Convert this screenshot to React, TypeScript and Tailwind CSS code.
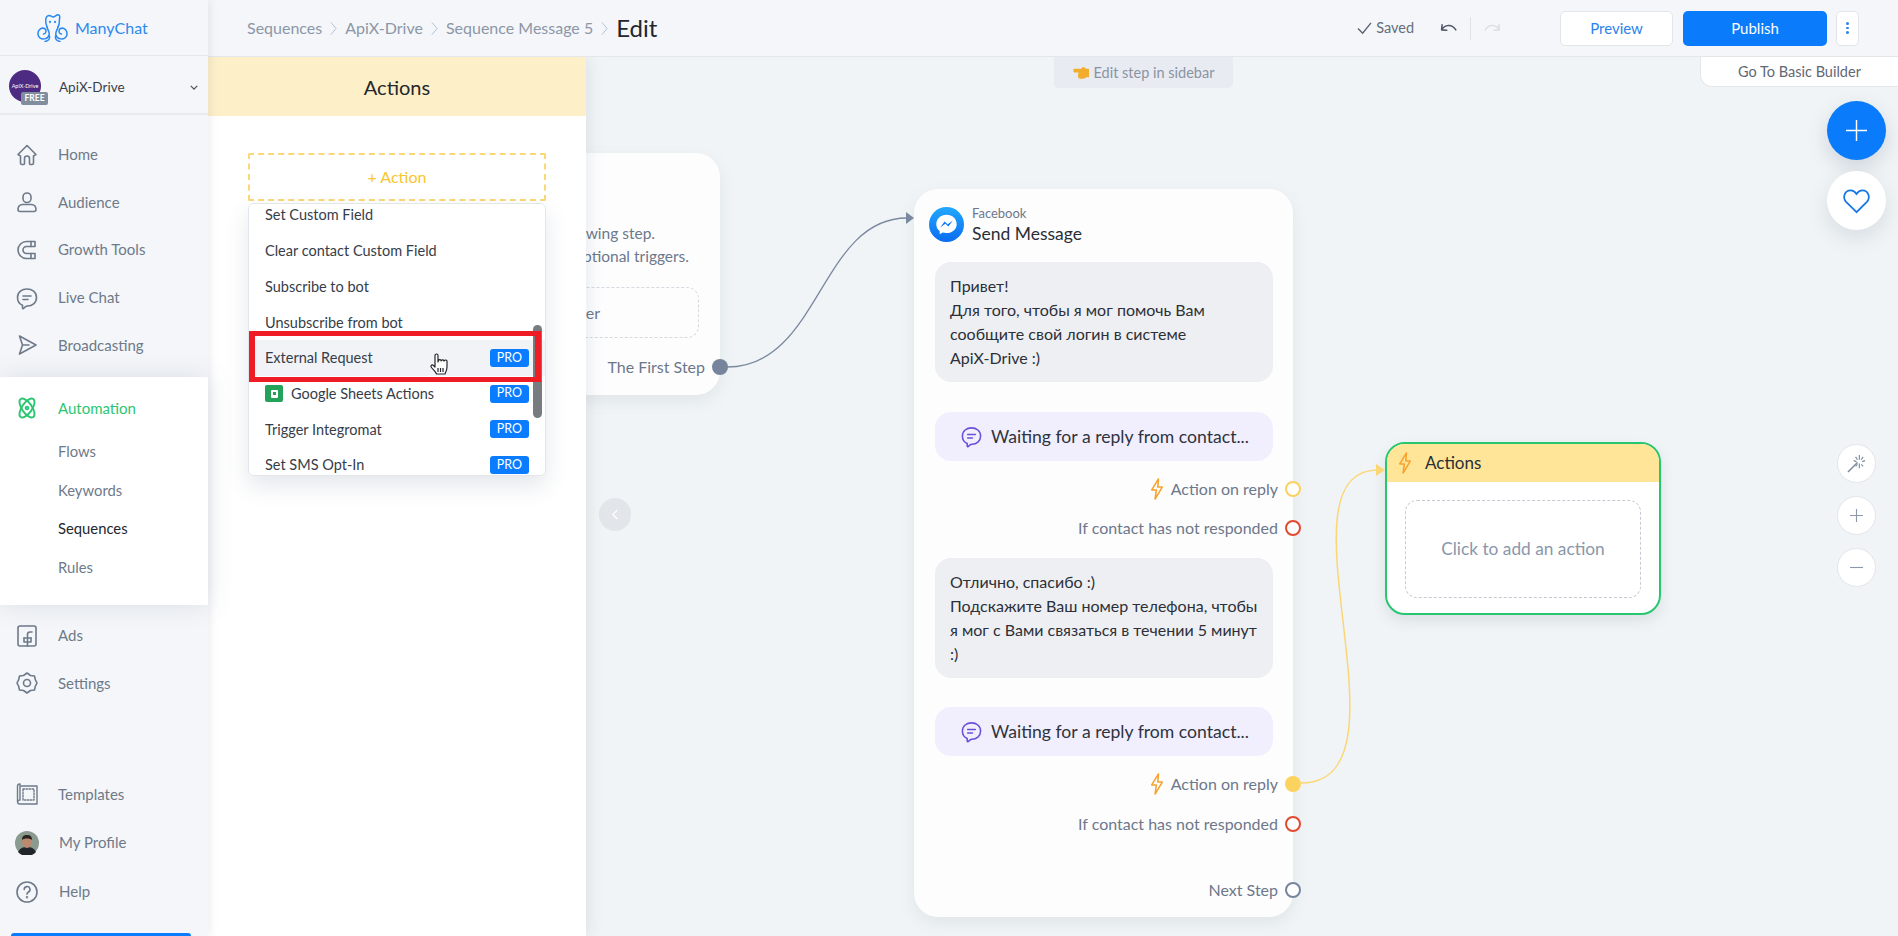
import React from "react";

const Ic = ({ children, className = "w-[24px] h-[24px]", sw = 1.6 }: { children: React.ReactNode; className?: string; sw?: number }) => (
  <svg viewBox="0 0 24 24" fill="none" stroke="currentColor" strokeWidth={sw} strokeLinecap="round" strokeLinejoin="round" className={className}>
    {children}
  </svg>
);

const HomeI = () => (
  <Ic><path d="M3 11.500 12 2.500l9 9-2.500 1.500v7a1.500 1.500 0 0 1-1.500 1.500h-1.500a1 1 0 0 1-1-1v-5a2.500 2.500 0 0 0-5 0v5a1 1 0 0 1-1 1H7A1.500 1.500 0 0 1 5.500 20v-7Z" /></Ic>
);
const UserI = () => (
  <Ic><path d="M8 7a4 4 0 0 1 8 0v1.500a4 4 0 0 1-8 0Z" /><path d="M7.500 14.500h9A5 5 0 0 1 21 19v.5a2 2 0 0 1-2 2H5a2 2 0 0 1-2-2V19a5 5 0 0 1 4.500-4.500Z" /></Ic>
);
const MagnetI = () => (
  <Ic><path d="M20 3.500h-8.500a8.500 8.500 0 0 0 0 17H20v-5h-8.500a3.500 3.500 0 0 1 0-7H20Z" /><path d="M16 3.500v5M16 15.500v5" /></Ic>
);
const ChatI = ({ className }: { className?: string }) => (
  <Ic className={className}><path d="M12 3c5 0 9.500 3 9.500 8.500S17 20 12.500 20c-1 0-1.500.2-2 .7L8.500 22.500c-.5.300-1 0-1-.5v-2.700C4.500 18 2.500 15 2.500 11.500 2.500 6 7 3 12 3Z" /><path d="M8 10h8M8 13.500h5" /></Ic>
);
const SendI = () => (
  <Ic><path d="M4.500 3 21 12 4.500 21 7.500 12ZM7.500 12H14" /></Ic>
);
const AtomI = () => (
  <Ic sw={1.9} className="w-[24px] h-[26px]"><ellipse cx="12" cy="12" rx="11" ry="5" transform="rotate(55 12 12)" /><ellipse cx="12" cy="12" rx="11" ry="5" transform="rotate(-55 12 12)" /><circle cx="12" cy="12" r="1.400" /></Ic>
);
const FbI = () => (
  <Ic><rect x="3" y="2" width="18" height="20" rx="2" /><path d="M17 8h-2a2.500 2.500 0 0 0-2.500 2.500V22M9 14h7" /><path d="M9 14v4h3.500M16 14v4h-3" /></Ic>
);
const GearI = () => (
  <Ic><path d="M12 2l3.500 2.500 4 .5.800 3.700L22 12l-1.700 3.300-.8 3.700-4 .5L12 22l-3.500-2.500-4-.5-.8-3.700L2 12l1.700-3.300.8-3.700 4-.5Z" /><circle cx="12" cy="12" r="3.500" /></Ic>
);
const TplI = () => (
  <Ic className="w-[24px] h-[24px]" sw={1.4}><path d="M5 4h17v18H5a2.500 2.500 0 0 1-2.500-2.500V4A2 2 0 0 1 5 2Zm0 0v14a2.500 2.500 0 0 0-2.500 2" /><rect x="8" y="7" width="11" height="11" strokeDasharray="1.500 1.500" /></Ic>
);
const HelpI = () => (
  <Ic><circle cx="12" cy="12" r="10" /><path d="M9.200 9.500a2.900 2.900 0 1 1 4.300 2.500c-1 .6-1.500 1.200-1.500 2.200" /><circle cx="12" cy="17.300" r=".4" /></Ic>
);

const Bolt = ({ className = "w-[14px] h-[22px]" }: { className?: string }) => (
  <svg viewBox="0 0 14 23" className={className} fill="none" stroke="#f7a22c" strokeWidth="1.600" strokeLinejoin="round">
    <path d="M8.500 1 1.500 12.500h4.800L5 22l7.500-12.500H7.800Z" />
  </svg>
);

const NavItem = ({ icon, label, h = "h-[47.6px]" }: { icon: React.ReactNode; label: string; h?: string }) => (
  <div className={`flex items-center ${h} pl-[15px] text-[#6e7a8a]`}>
    <div className="w-[43px] flex">{icon}</div>
    <span className="text-[15px] leading-none">{label}</span>
  </div>
);

const Logo = () => (
  <svg viewBox="0 0 31 28" className="w-[31px] h-[28px]" fill="none" stroke="#2b8af0" strokeWidth="1.500" strokeLinecap="round">
    <path d="M10 13C8 8 8 2 12 1.500c2 0 3 1.500 4 1.500 2 0 3-2 5-2.200 2 0 2 2.200 1.500 4.200-.5 3 .5 5-1.500 8" />
    <path d="M10 13c1 4 3 5 2 8-1 4-8 6-10.500 1C-.5 17 4 13 7.500 14.500c2.500 1.500 1.500 5.500-1 5.500" />
    <path d="M21 13c-1 4-3 5-2 8 1 4 8 6 10.500 1 2-5-2.500-9-6-7.500-2.500 1.500-1.500 5.500 1 5.500" />
    <path d="M12.500 22c.5 3-1.500 5-4.500 5.500M18.500 22c-.5 3 1.500 5 4.500 5.500" />
    <circle cx="13" cy="8" r=".4" /><circle cx="18" cy="8" r=".4" />
  </svg>
);

const Pro = () => (
  <span className="ml-auto mr-[16px] w-[39px] h-[18px] rounded-[3px] bg-[#0a7cff] text-white text-[12.5px] flex items-center justify-center">PRO</span>
);

const DropItem = ({ label, pro, hl, icon }: { label: string; pro?: boolean; hl?: boolean; icon?: React.ReactNode }) => (
  <div className={`h-[35.7px] flex items-center pl-[16px] text-[14.5px] text-[#363d49] ${hl ? "bg-[#f2f3f7]" : "bg-white"}`}>
    {icon}
    <span>{label}</span>
    {pro && <Pro />}
  </div>
);

const Output = ({ label, dot, bolt, cls = "" }: { label: string; dot: string; bolt?: boolean; cls?: string }) => (
  <div className={`relative -mr-[20px] pr-[15px] h-[24px] flex items-center justify-end gap-[7px] text-[16px] text-[#6c788a] ${cls}`}>
    {bolt && <Bolt />}
    <span>{label}</span>
    <span className={`absolute -right-[8px] top-[4px] w-[16px] h-[16px] rounded-full ${dot}`} />
  </div>
);

const Bubble = ({ lines, cls = "" }: { lines: string[]; cls?: string }) => (
  <div className={`h-[120px] bg-[#eeeff3] rounded-[16px] px-[15px] pt-[12px] text-[16px] leading-[24px] text-[#2c3038] ${cls}`}>
    {lines.map((l) => <div key={l} className="whitespace-nowrap">{l}</div>)}
  </div>
);

const Waiting = ({ cls = "" }: { cls?: string }) => (
  <div className={`h-[49px] bg-[#f1effd] rounded-[16px] flex items-center pl-[25px] gap-[8px] text-[17.6px] leading-none text-[#2e333d] whitespace-nowrap ${cls}`}>
    <span className="text-[#6a4fdc]"><ChatI className="w-[23px] h-[23px]" /></span>
    <span>Waiting for a reply from contact...</span>
  </div>
);

const Chev = () => (
  <svg viewBox="0 0 8 16" className="w-[7px] h-[15px] mx-[8px]" fill="none" stroke="#a9bcd6" strokeWidth="1"><path d="M1 1l6 7-6 7" /></svg>
);

export default function App() {
  return (
    <div className="w-[1898px] h-[936px] overflow-hidden flex bg-[#f0f4f6] font-['Lato',sans-serif]">
      {/* Sidebar */}
      <aside className="w-[208px] shrink-0 h-full flex flex-col bg-[#f4f6f9] relative z-30 shadow-[2px_0_8px_rgba(90,105,130,0.12)]">
        <div className="h-[56px] shrink-0 border-b border-[#e4e6ea] flex items-center pl-[37px] gap-[7px]">
          <Logo />
          <span className="text-[#2b8af0] text-[16px]">ManyChat</span>
        </div>
        <div className="h-[59px] shrink-0 border-b-2 border-[#e8eaee] flex items-center pl-[9px] relative">
          <div className="w-[32px] h-[32px] rounded-full bg-[#4d2b82] flex items-center justify-center text-white text-[5.5px] overflow-hidden mt-[3px]">ApiX-Drive</div>
          <span className="absolute left-[21px] top-[36px] w-[27px] h-[13px] bg-[#7f8d9c] rounded-[2px] text-white text-[8.5px] font-bold flex items-center justify-center">FREE</span>
          <span className="ml-[18px] mt-[5px] text-[13.5px] text-[#3a4049]">ApiX-Drive</span>
          <svg viewBox="0 0 10 6" className="absolute left-[190px] top-[29px] w-[8px] h-[5px]" fill="none" stroke="#4a5260" strokeWidth="1.600"><path d="M1 1l4 4 4-4" /></svg>
        </div>
        <div className="pt-[16px] shrink-0">
          <NavItem icon={<HomeI />} label="Home" />
          <NavItem icon={<UserI />} label="Audience" />
          <NavItem icon={<MagnetI />} label="Growth Tools" />
          <NavItem icon={<ChatI />} label="Live Chat" />
          <NavItem icon={<SendI />} label="Broadcasting" />
        </div>
        <div className="mt-[8px] h-[228px] shrink-0 bg-white shadow-[0_0_24px_rgba(90,105,130,0.16)] relative z-10 pt-[13px]">
          <div className="flex items-center h-[36px] pl-[15px] text-[#2cc672]">
            <div className="w-[43px] flex"><AtomI /></div>
            <span className="text-[15px]">Automation</span>
          </div>
          <div className="mt-[6px] pl-[58px] text-[14.8px] text-[#6e7a8a]">
            <div className="h-[38.5px] flex items-center">Flows</div>
            <div className="h-[38.5px] flex items-center">Keywords</div>
            <div className="h-[38.5px] flex items-center text-[#23272e]">Sequences</div>
            <div className="h-[38.5px] flex items-center">Rules</div>
          </div>
        </div>
        <div className="pt-[7px] shrink-0">
          <NavItem icon={<FbI />} label="Ads" />
          <NavItem icon={<GearI />} label="Settings" />
        </div>
        <div className="flex-1" />
        <div className="shrink-0">
          <NavItem icon={<TplI />} label="Templates" h="h-[48px]" />
          <div className="flex items-center h-[49px] pl-[15px] text-[#6e7a8a]">
            <div className="w-[44px] flex">
              <svg viewBox="0 0 24 24" className="w-[24px] h-[24px]">
                <circle cx="12" cy="12" r="12" fill="#8a9a8e" />
                <path d="M3 21c2-4 5-5 9-5s7 1 9 5a12 12 0 0 1-18 0Z" fill="#22262a" />
                <ellipse cx="12" cy="11" rx="5" ry="6" fill="#b98a70" />
                <path d="M7 9c0-4 2-5 5-5s5 1 5 5c-2-2-8-2-10 0Z" fill="#2a2322" />
              </svg>
            </div>
            <span className="text-[15px]">My Profile</span>
          </div>
          <div className="flex items-center h-[49px] pl-[15px] text-[#6e7a8a]">
            <div className="w-[44px] flex"><HelpI /></div>
            <span className="text-[15px]">Help</span>
          </div>
        </div>
        <div className="h-[3px] mt-[17px] ml-[11px] w-[180px] shrink-0 bg-[#0a7cff] rounded-t-md" />
      </aside>

      <div className="flex-1 min-w-0 flex flex-col h-full">
        {/* Header */}
        <header className="h-[57px] shrink-0 bg-[#f4f6f9] border-b border-[#e4e6ea] flex items-center pl-[39px] pr-[39px] relative z-20">
          <span className="text-[16px] text-[#8c97a8]">Sequences</span><Chev />
          <span className="text-[16px] text-[#8c97a8]">ApiX-Drive</span><Chev />
          <span className="text-[16px] text-[#8c97a8]">Sequence Message 5</span><Chev />
          <span className="text-[24px] text-[#22262d]">Edit</span>
          <div className="ml-auto flex items-center">
            <svg viewBox="0 0 16 14" className="w-[15px] h-[13px] text-[#596374]" fill="none" stroke="currentColor" strokeWidth="1.500"><path d="M1 7l5 5 9-11" /></svg>
            <span className="ml-[4px] text-[14.5px] text-[#646e7e]">Saved</span>
            <svg viewBox="0 0 18 12" className="ml-[26px] w-[17px] h-[11px]" fill="none" stroke="#4f5869" strokeWidth="1.700" strokeLinecap="round" strokeLinejoin="round"><path d="M2 2 1.500 7.500 7 8M1.500 7.500C5 2 12.500 .5 17 7.500" /></svg>
            <span className="mx-[13px] w-[1px] h-[23px] bg-[#dfe2e7]" />
            <svg viewBox="0 0 18 12" className="w-[17px] h-[11px]" fill="none" stroke="#dcdfe4" strokeWidth="1.700" strokeLinecap="round" strokeLinejoin="round"><path d="M16 2l.5 5.500L11 8M16.500 7.500C13 2 5.500 .5 1 7.500" /></svg>
            <button className="ml-[59px] w-[113px] h-[35px] rounded-[5px] bg-white border border-[#e2e5ea] text-[#2b82ee] text-[15px]">Preview</button>
            <button className="ml-[10px] w-[144px] h-[35px] rounded-[5px] bg-[#0a7bfb] text-white text-[15px]">Publish</button>
            <button className="ml-[9px] w-[23px] h-[35px] rounded-[5px] bg-white border border-[#e2e5ea] flex flex-col items-center justify-center gap-[2px]">
              <span className="w-[2.5px] h-[2.5px] rounded-full bg-[#2b82ee]" />
              <span className="w-[2.5px] h-[2.5px] rounded-full bg-[#2b82ee]" />
              <span className="w-[2.5px] h-[2.5px] rounded-full bg-[#2b82ee]" />
            </button>
          </div>
        </header>

        <div className="flex-1 min-h-0 flex">
          {/* Actions side panel */}
          <section className="w-[378px] shrink-0 h-full bg-white relative z-10 shadow-[3px_0_14px_rgba(90,105,130,0.12)]">
            <div className="h-[59px] bg-[#fdefc8] flex items-center justify-center text-[20px] text-[#23272e]">Actions</div>
            <div className="mt-[37px] mx-[40px] h-[48px] border-2 border-dashed border-[#fbd877] rounded-[2px] flex items-center justify-center text-[16px] text-[#f8c630]">+ Action</div>
            <div className="relative mt-[2px] mx-[40px]">
              <div className="h-[273px] overflow-hidden rounded-[6px] border border-[#e3e6ea] bg-white shadow-[0_10px_22px_rgba(90,105,130,0.16)]">
                <div className="-mt-[6.5px]">
                  <DropItem label="Set Custom Field" />
                  <DropItem label="Clear contact Custom Field" />
                  <DropItem label="Subscribe to bot" />
                  <DropItem label="Unsubscribe from bot" />
                  <DropItem label="External Request" pro hl />
                  <DropItem
                    label="Google Sheets Actions"
                    pro
                    icon={
                      <span className="w-[18px] h-[17px] mr-[8px] rounded-[2px] bg-[#24a25a] flex items-center justify-center">
                        <span className="w-[7px] h-[8px] bg-white rounded-[1px] flex items-center justify-center">
                          <span className="w-[3px] h-[3px] bg-[#24a25a]" />
                        </span>
                      </span>
                    }
                  />
                  <DropItem label="Trigger Integromat" pro />
                  <DropItem label="Set SMS Opt-In" pro />
                </div>
              </div>
              <span className="absolute left-[285px] top-[122px] w-[8.5px] h-[93px] rounded-full bg-[#777c80]" />
              <span className="absolute left-[1px] top-[128px] w-[292px] h-[51px] border-y-[5px] border-x-[6px] border-[#ee1c25]" />
              <svg viewBox="0 0 21 24" className="absolute left-[181px] top-[149px] w-[21px] h-[24px]" fill="#fff" stroke="#23262b" strokeWidth="1.200" strokeLinejoin="round">
                <path d="M6 15V3.500a1.500 1.500 0 0 1 3 0V10l.5-1.500a1.400 1.400 0 0 1 2.700.3l.3-.3a1.400 1.400 0 0 1 2.500.500l.5-.2a1.300 1.300 0 0 1 2.500.500v5.700c0 3-1 5-2 7H7.500c-1-2.500-3-4-5-6.500-1.500-1.800.5-3.500 2-2Z" />
                <path d="M9 16v4M11.500 16v4M14 16v4" fill="none" />
              </svg>
            </div>
          </section>

          {/* Canvas */}
          <main className="flex-1 min-w-0 relative">
            <div className="absolute left-[468px] top-0 w-[179px] h-[31px] rounded-b-[5px] bg-[#e8ebf2] flex items-center justify-center gap-[4px] text-[14.5px] text-[#8a93a3]">
              <svg viewBox="0 0 18 16" className="w-[17px] h-[15px]"><path d="M1 4h8l1-2c2 0 3 1 4 2h3v9h-3c-2 2-6 2-8 1-1-2-1-4 0-6H1.500C0 8 0 4 1 4Z" fill="#f2ad2c" /></svg>
              <span>Edit step in sidebar</span>
            </div>
            <div className="absolute right-0 top-0 w-[198px] h-[30px] rounded-bl-[12px] bg-white border-b border-l border-[#e4e6ea] flex items-center justify-center text-[14.5px] text-[#5f6875]">Go To Basic Builder</div>
            <button className="absolute right-[12px] top-[44px] w-[59px] h-[59px] rounded-full bg-[#0a7bfb] shadow-[0_8px_20px_rgba(90,105,130,0.22)] flex items-center justify-center">
              <svg viewBox="0 0 22 22" className="w-[21px] h-[21px]" stroke="#fff" strokeWidth="1.500"><path d="M11 0v22M0 11h22" /></svg>
            </button>
            <button className="absolute right-[12px] top-[114px] w-[59px] h-[59px] rounded-full bg-white shadow-[0_8px_20px_rgba(90,105,130,0.16)] flex items-center justify-center">
              <svg viewBox="0 0 24 22" className="w-[29px] h-[26px]" fill="none" stroke="#1678e6" strokeWidth="1.500"><path d="M12 20.500 3 11.500C0 8 2 2 7 2c2.500 0 4 1.500 5 3 1-1.500 2.500-3 5-3 5 0 7 6 4 9.500Z" /></svg>
            </button>
            <button className="absolute right-[22px] top-[387px] w-[39px] h-[39px] rounded-full bg-white border border-[#e3e6ea] flex items-center justify-center">
              <svg viewBox="0 0 20 20" className="w-[19px] h-[19px]" fill="none" stroke="#7e8a9d" strokeWidth="1.200"><path d="M1 19 11 9" strokeWidth="1.600" /><path d="M13 1v5M13 10v5M7 7l3 1M16 8l3-1M9 3l2 3M17 3l-2 3M9 13l2-2M17 13l-2-2" /></svg>
            </button>
            <button className="absolute right-[22px] top-[439px] w-[39px] h-[39px] rounded-full bg-white border border-[#e3e6ea] flex items-center justify-center">
              <svg viewBox="0 0 14 14" className="w-[13px] h-[13px]" stroke="#8c97a8" strokeWidth="1.200"><path d="M7 0v14M0 7h14" /></svg>
            </button>
            <button className="absolute right-[22px] top-[491px] w-[39px] h-[39px] rounded-full bg-white border border-[#e3e6ea] flex items-center justify-center">
              <svg viewBox="0 0 14 14" className="w-[13px] h-[13px]" stroke="#8c97a8" strokeWidth="1.200"><path d="M0 7h14" /></svg>
            </button>
            <button className="absolute left-[13px] top-[441px] w-[32px] h-[33px] rounded-full bg-[#e2e6eb] flex items-center justify-center">
              <svg viewBox="0 0 8 14" className="w-[6px] h-[11px]" fill="none" stroke="#fff" strokeWidth="1.600"><path d="M7 1 1 7l6 6" /></svg>
            </button>

            {/* First step node */}
            <div className="absolute left-[-186px] top-[96px] w-[320px] h-[242px] rounded-[24px] bg-[#fdfdfe] shadow-[0_6px_16px_rgba(90,105,130,0.1)] pt-[69px] pr-[21px] text-[#6c788a]">
              <div className="h-[23px] text-right pr-[44px] text-[15.5px] whitespace-nowrap leading-[23px]">Connect the following step.</div>
              <div className="h-[23px] text-right pr-[10px] text-[15.5px] whitespace-nowrap leading-[23px]">You can also add optional triggers.</div>
              <div className="mt-[19px] h-[51px] rounded-[12px] border border-dashed border-[#d5d9e0] flex items-center justify-end pr-[98px] text-[16px]">+ New Trigger</div>
              <div className="relative -mr-[21px] pr-[15px] mt-[17px] h-[24px] flex items-center justify-end text-[16px]">
                <span>The First Step</span>
                <span className="absolute -right-[8px] top-[4px] w-[16px] h-[16px] rounded-full bg-[#76859c]" />
              </div>
            </div>

            {/* Send message node */}
            <div className="absolute left-[328px] top-[132px] w-[379px] h-[728px] rounded-[24px] bg-[#fdfdfe] shadow-[0_6px_16px_rgba(90,105,130,0.1)] pl-[21px] pr-[20px]">
              <div className="h-[73px] -ml-[6px] pt-[18px] flex items-start">
                <svg viewBox="0 0 36 36" className="w-[35px] h-[35px] shrink-0">
                  <defs><linearGradient id="ms" x1="0" y1="0" x2="0" y2="1"><stop offset="0" stopColor="#22a8ff" /><stop offset="1" stopColor="#0a6cf0" /></linearGradient></defs>
                  <circle cx="18" cy="18" r="18" fill="url(#ms)" />
                  <path d="M18 8c-6 0-10.500 4.200-10.500 9.700 0 3 1.300 5.400 3.500 7.100V28l3.100-1.700c1.200.3 2.500.5 3.900.5 6 0 10.500-4.200 10.500-9.100C28.500 12.200 24 8 18 8Z" fill="#fff" />
                  <path d="m11.500 21 4.500-6 3.200 2.700L24.500 14 20 20l-3.200-2.700Z" fill="#0f7cf4" />
                </svg>
                <div className="ml-[8px] -mt-[2px]">
                  <div className="text-[13px] leading-[16px] text-[#6c788a]">Facebook</div>
                  <div className="text-[17.5px] leading-[24px] mt-[1px] text-[#2a2e36]">Send Message</div>
                </div>
              </div>
              <Bubble lines={["Привет!", "Для того, чтобы я мог помочь Вам", "сообщите свой логин в системе", "ApiX-Drive :)"]} />
              <Waiting cls="mt-[30px]" />
              <Output cls="mt-[16px]" label="Action on reply" bolt dot="bg-white border-[2.5px] border-[#fad15f]" />
              <Output cls="mt-[15px]" label="If contact has not responded" dot="bg-white border-[2.5px] border-[#e2492f]" />
              <Bubble cls="mt-[18px]" lines={["Отлично, спасибо :)", "Подскажите Ваш номер телефона, чтобы", "я мог с Вами связаться в течении 5 минут", ":)"]} />
              <Waiting cls="mt-[29px]" />
              <Output cls="mt-[16px]" label="Action on reply" bolt dot="bg-[#fdd35f]" />
              <Output cls="mt-[16px]" label="If contact has not responded" dot="bg-white border-[2.5px] border-[#e2492f]" />
              <Output cls="mt-[42px]" label="Next Step" dot="bg-white border-[2.5px] border-[#76859c]" />
            </div>

            {/* Actions node */}
            <div className="absolute left-[799px] top-[385px] w-[276px] h-[173px] rounded-[20px] border-2 border-[#28c76f] bg-white overflow-hidden shadow-[0_6px_14px_rgba(90,105,130,0.14)]">
              <div className="h-[38px] bg-[#fee598] flex items-center pl-[11px] gap-[13px] text-[17px] text-[#2a2e36]">
                <Bolt className="w-[14px] h-[22px]" />
                <span>Actions</span>
              </div>
              <div className="mt-[18px] mx-[18px] h-[98px] rounded-[12px] border-[1.5px] border-dashed border-[#c4c9d2] flex items-center justify-center text-[17.3px] text-[#8a97ab]">Click to add an action</div>
            </div>

            {/* Connections */}
            <svg className="absolute left-0 top-0 w-[1312px] h-[879px] pointer-events-none overflow-visible" viewBox="586 57 1312 879" fill="none">
              <path d="M727 367C820 367 820 218 907 218" stroke="#7a88a0" strokeWidth="1.300" />
              <path d="M914 218l-8-6v12Z" fill="#7a88a0" />
              <path d="M1301 783C1420 783 1270 470 1378 470" stroke="#fbd675" strokeWidth="1.500" />
              <path d="M1385 470l-9-6v12Z" fill="#fbd675" />
            </svg>
          </main>
        </div>
      </div>
    </div>
  );
}
